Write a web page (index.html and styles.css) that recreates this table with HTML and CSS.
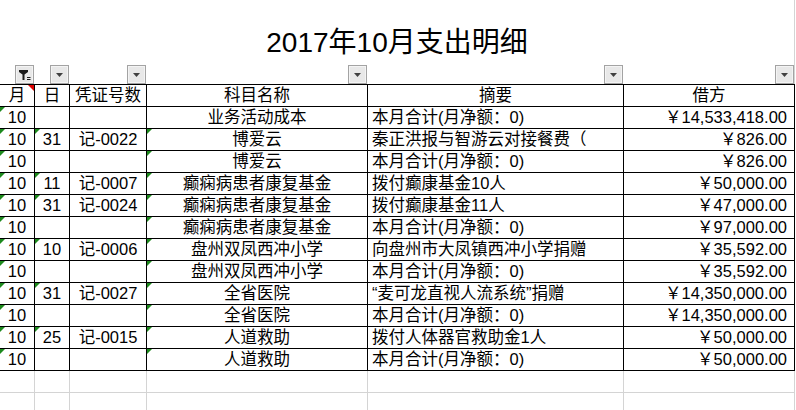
FILE: index.html
```html
<!DOCTYPE html>
<html lang="zh-CN">
<head>
<meta charset="utf-8">
<link rel="stylesheet" href="styles.css">
</head>
<body>
<div class="page">
  <div class="title">2017年10月支出明细</div>
  <div class="sheet">
    <div class="f"><span class="btn"><svg width="13" height="12" viewBox="0 0 13 12"><path d="M1 1H10V3L6.5 5.5V11H4.5V5.5L1 3Z" fill="#1a1a1a"/><path d="M9 8.5H12.5M9 10.5H12.5" stroke="#1a1a1a" stroke-width="1"/></svg></span></div>
    <div class="f"><span class="btn"><svg width="7" height="4" viewBox="0 0 7 4"><path d="M0 0H7L3.5 4Z" fill="#404040"/></svg></span></div>
    <div class="f"><span class="btn"><svg width="7" height="4" viewBox="0 0 7 4"><path d="M0 0H7L3.5 4Z" fill="#404040"/></svg></span></div>
    <div class="f"><span class="btn"><svg width="7" height="4" viewBox="0 0 7 4"><path d="M0 0H7L3.5 4Z" fill="#404040"/></svg></span></div>
    <div class="f"><span class="btn"><svg width="7" height="4" viewBox="0 0 7 4"><path d="M0 0H7L3.5 4Z" fill="#404040"/></svg></span></div>
    <div class="f last"><span class="btn"><svg width="7" height="4" viewBox="0 0 7 4"><path d="M0 0H7L3.5 4Z" fill="#404040"/></svg></span></div>

    <div class="c h note">月</div>
    <div class="c h">日</div>
    <div class="c h">凭证号数</div>
    <div class="c h">科目名称</div>
    <div class="c h">摘要</div>
    <div class="c h">借方</div>

    <div class="c g">10</div><div class="c"></div><div class="c"></div><div class="c">业务活动成本</div><div class="c l">本月合计(月净额：0)</div><div class="c r">￥14,533,418.00</div>
    <div class="c g">10</div><div class="c g">31</div><div class="c">记-0022</div><div class="c g">博爱云</div><div class="c l">秦正洪报与智游云对接餐费（</div><div class="c r">￥826.00</div>
    <div class="c g">10</div><div class="c"></div><div class="c"></div><div class="c g">博爱云</div><div class="c l">本月合计(月净额：0)</div><div class="c r">￥826.00</div>
    <div class="c g">10</div><div class="c g">11</div><div class="c">记-0007</div><div class="c g">癫痫病患者康复基金</div><div class="c l">拨付癫康基金10人</div><div class="c r">￥50,000.00</div>
    <div class="c g">10</div><div class="c g">31</div><div class="c">记-0024</div><div class="c g">癫痫病患者康复基金</div><div class="c l">拨付癫康基金11人</div><div class="c r">￥47,000.00</div>
    <div class="c g">10</div><div class="c"></div><div class="c"></div><div class="c g">癫痫病患者康复基金</div><div class="c l">本月合计(月净额：0)</div><div class="c r">￥97,000.00</div>
    <div class="c g">10</div><div class="c g">10</div><div class="c">记-0006</div><div class="c g">盘州双凤西冲小学</div><div class="c l">向盘州市大凤镇西冲小学捐赠</div><div class="c r">￥35,592.00</div>
    <div class="c g">10</div><div class="c"></div><div class="c"></div><div class="c g">盘州双凤西冲小学</div><div class="c l">本月合计(月净额：0)</div><div class="c r">￥35,592.00</div>
    <div class="c g">10</div><div class="c g">31</div><div class="c">记-0027</div><div class="c g">全省医院</div><div class="c l">“麦可龙直视人流系统”捐赠</div><div class="c r">￥14,350,000.00</div>
    <div class="c g">10</div><div class="c"></div><div class="c"></div><div class="c g">全省医院</div><div class="c l">本月合计(月净额：0)</div><div class="c r">￥14,350,000.00</div>
    <div class="c g">10</div><div class="c g">25</div><div class="c">记-0015</div><div class="c g">人道救助</div><div class="c l">拨付人体器官救助金1人</div><div class="c r">￥50,000.00</div>
    <div class="c g">10</div><div class="c"></div><div class="c"></div><div class="c g">人道救助</div><div class="c l">本月合计(月净额：0)</div><div class="c r">￥50,000.00</div>

    <div class="e"></div><div class="e"></div><div class="e"></div><div class="e"></div><div class="e"></div><div class="e"></div>
    <div class="e"></div><div class="e"></div><div class="e"></div><div class="e"></div><div class="e"></div><div class="e"></div>
  </div>
</div>
</body>
</html>
```

FILE: styles.css
```css
* { box-sizing: border-box; }

body {
  margin: 0;
  background: #fff;
  color: #000;
  font-family: "Liberation Sans", "Noto Sans CJK SC", sans-serif;
}

.page {
  width: 796px;
  height: 410px;
  overflow: hidden;
}

.title {
  width: 795px;
  height: 62px;
  padding-top: 29px;
  border-right: 1px solid #d4d4d4;
  font-size: 28px;
  line-height: 28px;
  text-align: center;
}

.sheet {
  display: grid;
  grid-template-columns: 35px 35px 77px 221px 256px 171px;
}

.f {
  height: 22px;
  display: flex;
  justify-content: flex-end;
  align-items: flex-end;
  border-right: 1px solid transparent;
}

.f.last { border-right-color: #d4d4d4; }

.btn {
  width: 19px;
  height: 19px;
  border: 1px solid #a3a3a3;
  background: #e8e8e8;
  box-shadow: inset 0 0 0 1px #f4f4f4;
  display: flex;
  align-items: center;
  justify-content: center;
}

.c {
  position: relative;
  height: 22px;
  border-right: 1px solid #000;
  border-bottom: 1px solid #000;
  font-size: 16.5px;
  line-height: 21px;
  text-align: center;
  white-space: nowrap;
  overflow: hidden;
}

.h {
  height: 23px;
  border-top: 1px solid #000;
}

.l { text-align: left; padding-left: 4px; }
.r { text-align: right; padding-right: 7px; }

.g::before {
  content: "";
  position: absolute;
  left: 0;
  top: 0;
  border-style: solid;
  border-width: 5px 5px 0 0;
  border-color: #1d8a1d transparent transparent transparent;
}

.note::after {
  content: "";
  position: absolute;
  right: 0;
  top: 0;
  border-style: solid;
  border-width: 6px 0 0 6px;
  border-color: #e00000 transparent transparent transparent;
}

.e {
  height: 22px;
  border-right: 1px solid #d4d4d4;
  border-bottom: 1px solid #d4d4d4;
}
```
